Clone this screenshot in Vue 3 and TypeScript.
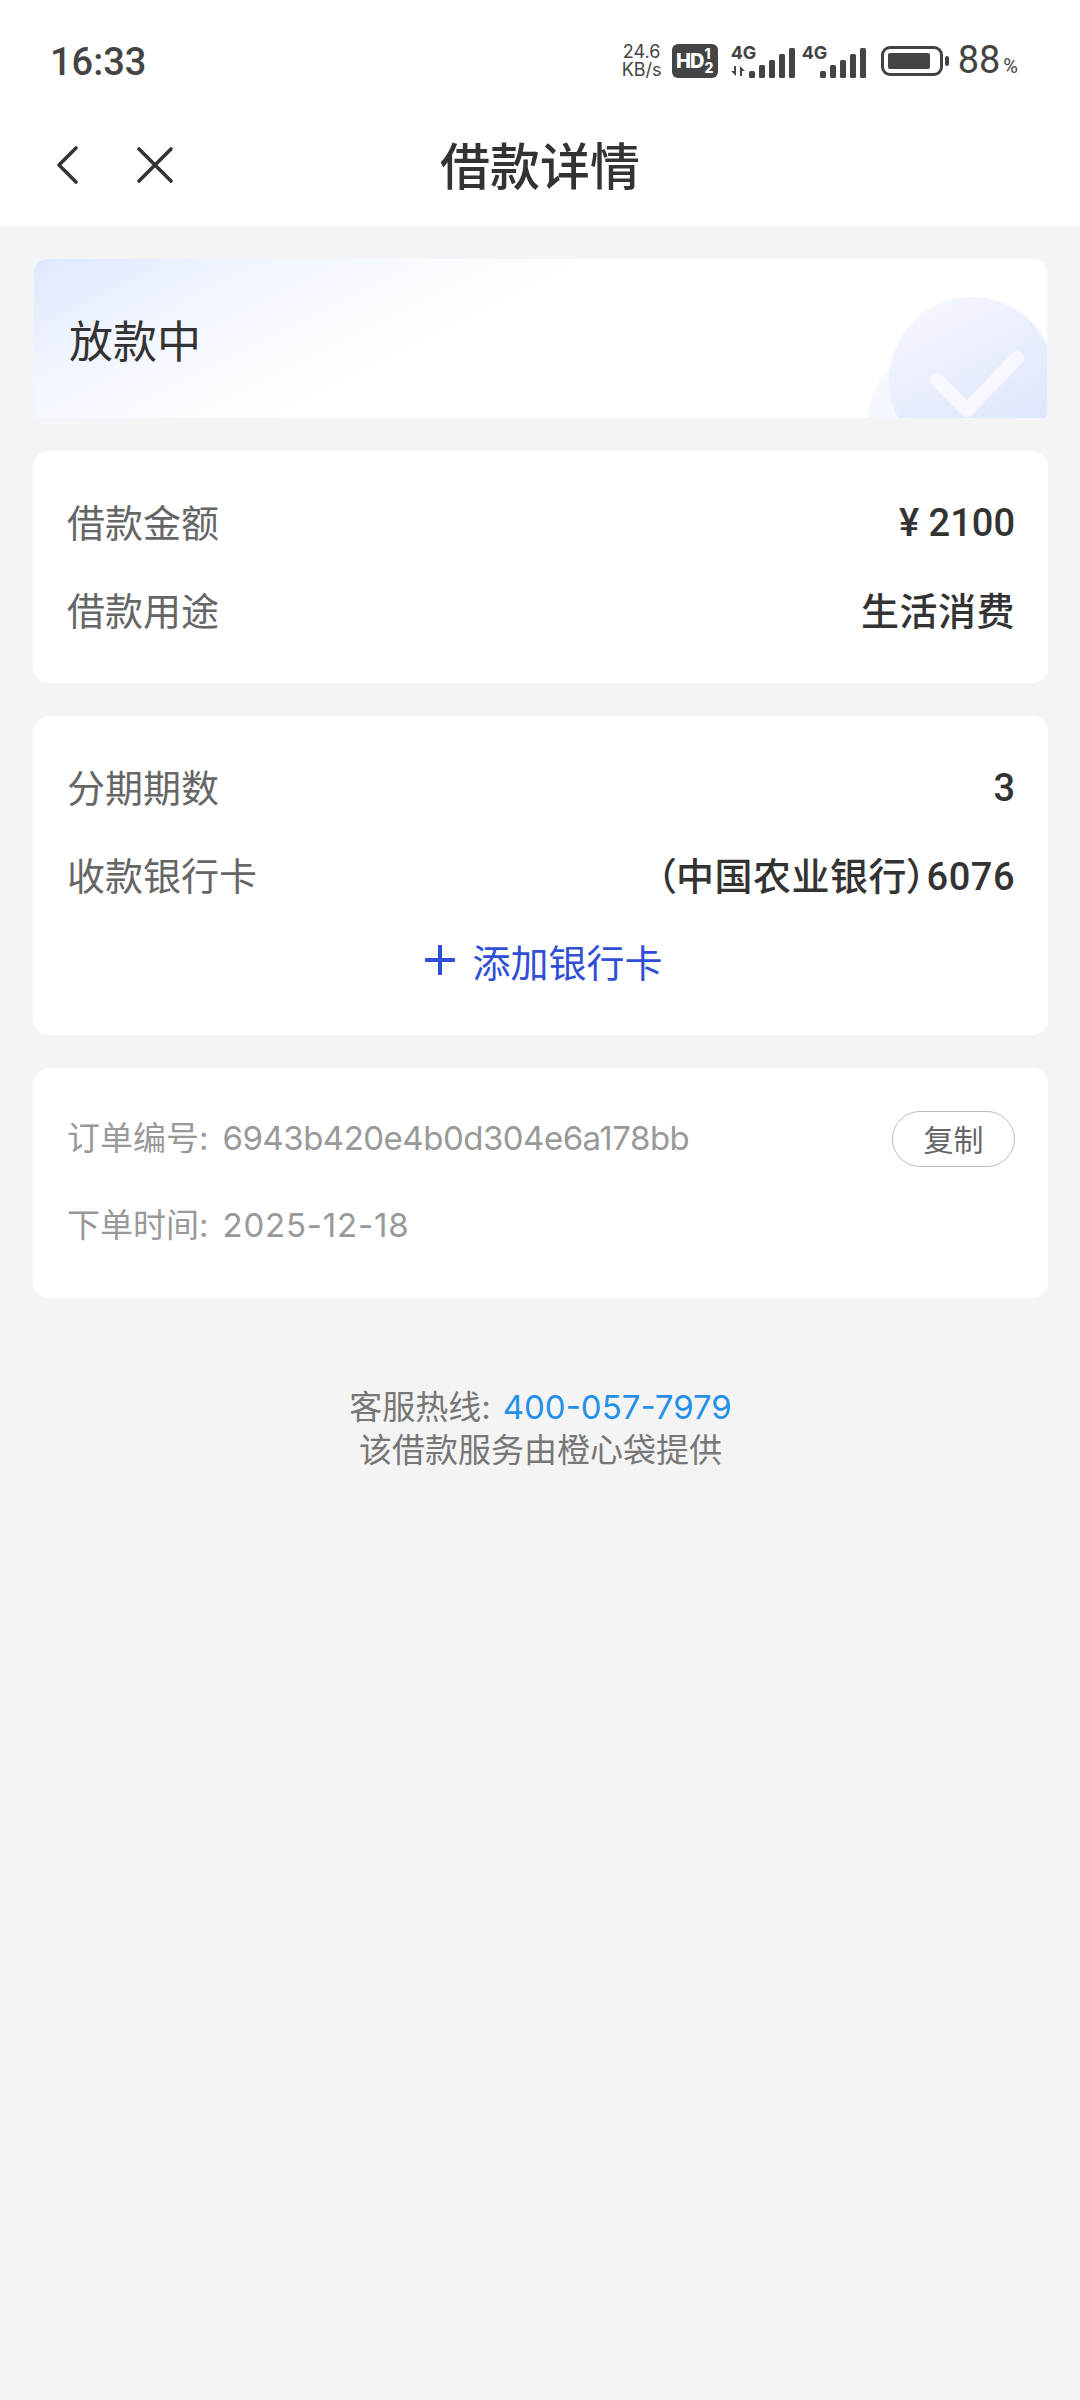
<script setup lang="ts">
type Row = { label: string; value: string; cjk?: boolean };

const amountRows: Row[] = [
  { label: '借款金额', value: '¥ 2100' },
  { label: '借款用途', value: '生活消费', cjk: true },
];

const bankRows: Row[] = [
  { label: '分期期数', value: '3' },
  { label: '收款银行卡', value: '（中国农业银行）6076', cjk: true },
];

const signalBars = [
  { x: 0, h: 7 },
  { x: 10, h: 13 },
  { x: 20, h: 18 },
  { x: 30, h: 24 },
  { x: 40, h: 30 },
];
</script>

<template>
  <div class="page">
    <header class="top">
      <div class="status">
        <span class="clock">16:33</span>
        <div class="status__right">
          <div class="speed"><span>24.6</span><span>KB/s</span></div>
          <div class="hd">
            <span class="hd__main">HD</span>
            <span class="hd__sims"><i>1</i><i>2</i></span>
          </div>
          <div class="net">
            <div class="net__type">
              <span>4G</span>
              <svg class="net__arrows" width="16" height="10" viewBox="0 0 16 10">
                <path d="M5 0v10L0 5h3V0zM9 10V0l5 5h-3v5z" fill="#444" />
              </svg>
            </div>
            <svg class="net__bars" width="46" height="30" viewBox="0 0 46 30">
              <rect v-for="b in signalBars" :key="b.x" :x="b.x" :y="30 - b.h" width="6" :height="b.h" rx="1.500" fill="#444" />
            </svg>
          </div>
          <div class="net net--second">
            <div class="net__type"><span>4G</span></div>
            <svg class="net__bars" width="46" height="30" viewBox="0 0 46 30">
              <rect v-for="b in signalBars" :key="b.x" :x="b.x" :y="30 - b.h" width="6" :height="b.h" rx="1.500" fill="#444" />
            </svg>
          </div>
          <div class="battery">
            <div class="battery__body"><div class="battery__fill" :style="{ width: '88%' }"></div></div>
            <div class="battery__nub"></div>
          </div>
          <div class="level">88<small>%</small></div>
        </div>
      </div>
      <nav class="nav">
        <svg class="nav__back" width="24" height="40" viewBox="0 0 24 40" fill="none">
          <path d="M21 3 4 20l17 17" stroke="#333" stroke-width="3.600" stroke-linecap="round" stroke-linejoin="round" />
        </svg>
        <svg class="nav__close" width="38" height="38" viewBox="0 0 38 38" fill="none">
          <path d="M3 3l32 32M35 3 3 35" stroke="#333" stroke-width="3.600" stroke-linecap="round" />
        </svg>
        <h1 class="nav__title">借款详情</h1>
      </nav>
    </header>

    <main class="content">
      <section class="banner">
        <span class="banner__text">放款中</span>
        <svg class="banner__art" width="180" height="125" viewBox="0 0 180 125" fill="none">
          <defs>
            <linearGradient id="disc" x1="0.300" y1="0" x2="0.800" y2="1">
              <stop offset="0" stop-color="#f4f6fe" />
              <stop offset="1" stop-color="#dbe3fc" />
            </linearGradient>
          </defs>
          <circle cx="82" cy="132" r="82" fill="#f5f7fe" />
          <circle cx="105" cy="87" r="83" fill="url(#disc)" />
          <path d="M70 87l30 30 50-52" stroke="#f7f8fe" stroke-width="14" stroke-linecap="round" stroke-linejoin="round" />
        </svg>
      </section>

      <section class="card">
        <div v-for="r in amountRows" :key="r.label" class="row">
          <span class="row__label">{{ r.label }}</span>
          <span class="row__value" :class="{ 'row__value--cjk': r.cjk }">{{ r.value }}</span>
        </div>
      </section>

      <section class="card card--bank">
        <div v-for="r in bankRows" :key="r.label" class="row">
          <span class="row__label">{{ r.label }}</span>
          <span class="row__value" :class="{ 'row__value--cjk': r.cjk }">{{ r.value }}</span>
        </div>
        <div class="add">
          <svg width="30" height="30" viewBox="0 0 30 30" fill="none">
            <path d="M15 1v28M1 15h28" stroke="#2f4fd6" stroke-width="4" stroke-linecap="round" />
          </svg>
          <span>添加银行卡</span>
        </div>
      </section>

      <section class="card card--order">
        <div class="meta">
          <span class="meta__text">订单编号:<span class="meta__value meta__value--id">6943b420e4b0d304e6a178bb</span></span>
          <button class="copy" type="button">复制</button>
        </div>
        <div class="meta meta--time">
          <span class="meta__text">下单时间:<span class="meta__value meta__value--date">2025-12-18</span></span>
        </div>
      </section>

      <footer class="foot">
        <p>客服热线:<span class="foot__phone">400-057-7979</span></p>
        <p>该借款服务由橙心袋提供</p>
      </footer>
    </main>
  </div>
</template>

<style scoped>
.page {
  width: 1080px;
  min-height: 2400px;
  background: #f4f4f4;
  font-family: Inter, "Noto Sans CJK SC", "Noto Sans", sans-serif;
  color: #333;
}

.top {
  background: #fff;
  height: 226px;
  display: flex;
  flex-direction: column;
}

.status {
  height: 122px;
  padding: 0 62px 0 50px;
  display: flex;
  align-items: center;
  justify-content: space-between;
}

.clock {
  font-family: Roboto, sans-serif;
  font-size: 38px;
  font-weight: 500;
  color: #444;
  padding-top: 2px;
}

.status__right {
  display: flex;
  align-items: center;
  color: #444;
}

.speed {
  display: flex;
  flex-direction: column;
  align-items: center;
  width: 42px;
  font-size: 18px;
  line-height: 18px;
  margin-right: 9px;
}

.hd {
  width: 46px;
  height: 34px;
  background: #444;
  border-radius: 6px;
  color: #fff;
  display: flex;
  align-items: center;
  justify-content: center;
  font-weight: 800;
  margin-right: 13px;
}

.hd__main {
  font-size: 20px;
  letter-spacing: -1px;
}

.hd__sims {
  display: flex;
  flex-direction: column;
  margin-left: 1px;
  font-size: 14px;
  line-height: 14px;
}

.hd__sims i {
  font-style: normal;
}

.net {
  display: flex;
  align-items: flex-end;
  height: 34px;
  margin-right: 7px;
}

.net--second {
  margin-right: 15px;
}

.net__type {
  width: 28px;
  height: 34px;
  flex-shrink: 0;
  display: flex;
  flex-direction: column;
  font-size: 18px;
  font-weight: 700;
  line-height: 17px;
}

.net__arrows {
  margin-top: 5px;
}

.net__bars {
  margin-left: -10px;
}

.battery {
  display: flex;
  align-items: center;
  margin-right: 9px;
}

.battery__body {
  width: 62px;
  height: 30px;
  border: 3px solid #444;
  border-radius: 9px;
  padding: 4px;
  box-sizing: border-box;
}

.battery__fill {
  height: 100%;
  background: #444;
  border-radius: 2px;
}

.battery__nub {
  width: 4px;
  height: 10px;
  background: #444;
  border-radius: 2px;
  margin-left: 2px;
}

.level {
  font-family: Roboto, sans-serif;
  font-size: 38px;
  font-weight: 400;
  line-height: 40px;
  padding-top: 4px;
}

.level small {
  font-size: 20px;
  font-weight: 400;
  margin-left: 3px;
}

.nav {
  position: relative;
  flex: 1;
  display: flex;
  align-items: center;
  padding: 0 0 0 55px;
  margin-top: -18px;
}

.nav__close {
  margin-left: 57px;
}

.nav__title {
  position: absolute;
  left: 0;
  right: 0;
  margin: 0;
  padding-bottom: 4px;
  text-align: center;
  font-size: 50px;
  font-weight: 500;
  color: #333;
}

.content {
  padding: 33px 32px 0 33px;
  display: flex;
  flex-direction: column;
  gap: 33px;
}

.banner {
  position: relative;
  height: 159px;
  margin: 0 1px;
  overflow: hidden;
  border-radius: 14px 14px 0 0;
  background: linear-gradient(153deg, #dfe8fe 0%, #f1f5ff 18%, #fff 42%);
  display: flex;
  align-items: center;
  padding-left: 35px;
}

.banner__text {
  font-size: 44px;
  color: #333;
}

.banner__art {
  position: absolute;
  right: 0;
  bottom: 0;
}

.card {
  background: #fff;
  border-radius: 16px;
  padding: 28px 33px 28px 34px;
  display: flex;
  flex-direction: column;
}

.card--bank {
  height: 319px;
  box-sizing: border-box;
}

.card--order {
  height: 230px;
  box-sizing: border-box;
  padding-top: 43px;
}

.row {
  height: 88px;
  display: flex;
  align-items: center;
  justify-content: space-between;
}

.row__label {
  font-size: 38px;
  color: #666;
  padding-bottom: 6px;
}

.row__value {
  font-family: Roboto, "Noto Sans CJK SC", sans-serif;
  font-size: 38px;
  font-weight: 500;
  color: #333;
}

.row__value--cjk {
  font-feature-settings: "palt";
  letter-spacing: 0.5px;
  padding-bottom: 6px;
}

.add {
  display: flex;
  align-items: center;
  justify-content: center;
  gap: 17px;
  height: 86px;
  padding: 0 0 6px 6px;
  box-sizing: border-box;
  color: #2f4fd6;
  font-size: 38px;
}

.meta {
  display: flex;
  align-items: center;
  justify-content: space-between;
  height: 55px;
  font-size: 33px;
  color: #999;
}

.meta__text {
  padding-bottom: 6px;
}

.meta__value {
  margin-left: 14px;
}

.meta__value--id {
  letter-spacing: -0.5px;
}

.meta__value--date {
  letter-spacing: 0.8px;
}

.meta--time {
  margin-top: 32px;
}

.copy {
  width: 123px;
  height: 56px;
  border: 1px solid #bbb;
  border-radius: 28px;
  background: #fff;
  padding: 0 0 2px;
  font: inherit;
  font-size: 30px;
  color: #666;
}

.foot {
  margin-top: 55px;
  text-align: center;
  font-size: 33px;
  line-height: 43px;
  color: #777;
}

.foot p {
  margin: 0;
}

.foot__phone {
  margin-left: 12px;
  color: #2590e8;
}
</style>
